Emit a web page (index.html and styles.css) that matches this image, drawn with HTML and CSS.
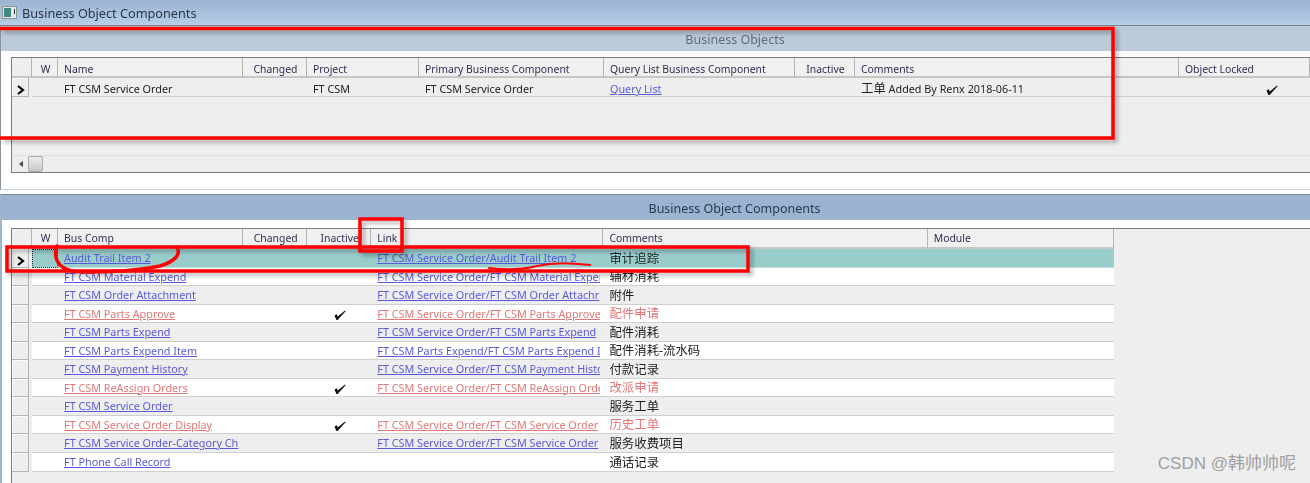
FILE: index.html
```html
<!DOCTYPE html>
<html lang="en">

<head>
    <meta charset="UTF-8">
    <meta name="viewport" content="width=device-width, initial-scale=1.0">
    <title>Business Object Components</title>
    <link rel="stylesheet" href="styles.css">
</head>

<body>
    <svg class="defs" width="0" height="0">
        <symbol id="check" viewBox="0 0 12 10">
            <path d="M0.5 5.5 L2.8 4.2 L3.8 6.4 L11 0.5 L11.6 1.2 L3.6 10 L2.4 10 Z" fill="#111" />
        </symbol>
        <symbol id="arrow" viewBox="0 0 8 10">
            <path d="M1 1 L6 5 L1 9" fill="none" stroke="#000" stroke-width="2.2" />
        </symbol>
    </svg>

    <header class="titlebar">
        <svg class="app-icon" width="15" height="13" viewBox="0 0 15 13">
            <rect x="0.5" y="0.5" width="14" height="12" fill="#e4e8ea" stroke="#8c9296" />
            <rect x="2" y="2" width="7" height="9" fill="#3f8a80" />
            <rect x="12" y="3" width="1" height="5" fill="#333" />
        </svg>
        <span>Business Object Components</span>
    </header>

    <section class="applet applet-top">
        <h2 class="applet-title">Business Objects</h2>
        <div class="grid">
            <table class="list">
                <colgroup>
                    <col class="c-mark">
                    <col class="c-w">
                    <col class="c-name">
                    <col class="c-changed">
                    <col class="c-project">
                    <col class="c-primary">
                    <col class="c-query">
                    <col class="c-inactive2">
                    <col class="c-comments">
                    <col>
                </colgroup>
                <thead>
                    <tr>
                        <th class="mark"></th>
                        <th class="mid">W</th>
                        <th>Name</th>
                        <th class="mid">Changed</th>
                        <th>Project</th>
                        <th>Primary Business Component</th>
                        <th>Query List Business Component</th>
                        <th class="mid">Inactive</th>
                        <th>Comments</th>
                        <th>Object Locked</th>
                    </tr>
                </thead>
                <tbody>
                    <tr class="tall plain">
                        <td class="mark"><svg width="8" height="10"><use href="#arrow" /></svg></td>
                        <td></td>
                        <td>FT CSM Service Order</td>
                        <td></td>
                        <td>FT CSM</td>
                        <td>FT CSM Service Order</td>
                        <td><a href="#">Query List</a></td>
                        <td></td>
                        <td><span class="cn">工单</span> Added By Renx 2018-06-11</td>
                        <td class="locked"><svg class="tick" width="12" height="10"><use href="#check" /></svg></td>
                    </tr>
                </tbody>
            </table>
            <div class="hscroll">
                <span class="scroll-left"></span>
                <span class="scroll-thumb"></span>
            </div>
        </div>
    </section>

    <section class="applet applet-bottom">
        <h2 class="applet-title">Business Object Components</h2>
        <div class="grid grid-fill">
            <table class="list list-short">
                <colgroup>
                    <col class="c-mark">
                    <col class="c-w">
                    <col class="c-name">
                    <col class="c-changed">
                    <col class="c-changed">
                    <col class="c-link">
                    <col class="c-comments">
                    <col class="c-module">
                </colgroup>
                <thead>
                    <tr>
                        <th class="mark"></th>
                        <th class="mid">W</th>
                        <th>Bus Comp</th>
                        <th class="mid">Changed</th>
                        <th class="mid">Inactive</th>
                        <th>Link</th>
                        <th>Comments</th>
                        <th>Module</th>
                    </tr>
                </thead>
                <tbody>
                    <tr class="tall current">
                        <td class="mark"><svg width="8" height="10"><use href="#arrow" /></svg></td>
                        <td class="focus"></td>
                        <td><a href="#">Audit Trail Item 2</a></td>
                        <td></td>
                        <td></td>
                        <td><a href="#">FT CSM Service Order/Audit Trail Item 2</a></td>
                        <td class="cn">审计追踪</td>
                        <td></td>
                    </tr>
                    <tr class="white">
                        <td class="mark"></td>
                        <td></td>
                        <td><a href="#">FT CSM Material Expend</a></td>
                        <td></td>
                        <td></td>
                        <td><a href="#">FT CSM Service Order/FT CSM Material Exper</a></td>
                        <td class="cn">辅材消耗</td>
                        <td></td>
                    </tr>
                    <tr class="tall">
                        <td class="mark"></td>
                        <td></td>
                        <td><a href="#">FT CSM Order Attachment</a></td>
                        <td></td>
                        <td></td>
                        <td><a href="#">FT CSM Service Order/FT CSM Order Attachr</a></td>
                        <td class="cn">附件</td>
                        <td></td>
                    </tr>
                    <tr class="white off">
                        <td class="mark"></td>
                        <td></td>
                        <td><a href="#">FT CSM Parts Approve</a></td>
                        <td></td>
                        <td class="mid"><svg class="tick" width="12" height="10"><use href="#check" /></svg></td>
                        <td><a href="#">FT CSM Service Order/FT CSM Parts Approve</a></td>
                        <td class="cn">配件申请</td>
                        <td></td>
                    </tr>
                    <tr class="tall">
                        <td class="mark"></td>
                        <td></td>
                        <td><a href="#">FT CSM Parts Expend</a></td>
                        <td></td>
                        <td></td>
                        <td><a href="#">FT CSM Service Order/FT CSM Parts Expend</a></td>
                        <td class="cn">配件消耗</td>
                        <td></td>
                    </tr>
                    <tr class="white">
                        <td class="mark"></td>
                        <td></td>
                        <td><a href="#">FT CSM Parts Expend Item</a></td>
                        <td></td>
                        <td></td>
                        <td><a href="#">FT CSM Parts Expend/FT CSM Parts Expend I</a></td>
                        <td class="cn">配件消耗-流水码</td>
                        <td></td>
                    </tr>
                    <tr class="tall">
                        <td class="mark"></td>
                        <td></td>
                        <td><a href="#">FT CSM Payment History</a></td>
                        <td></td>
                        <td></td>
                        <td><a href="#">FT CSM Service Order/FT CSM Payment Histo</a></td>
                        <td class="cn">付款记录</td>
                        <td></td>
                    </tr>
                    <tr class="white off">
                        <td class="mark"></td>
                        <td></td>
                        <td><a href="#">FT CSM ReAssign Orders</a></td>
                        <td></td>
                        <td class="mid"><svg class="tick" width="12" height="10"><use href="#check" /></svg></td>
                        <td><a href="#">FT CSM Service Order/FT CSM ReAssign Orde</a></td>
                        <td class="cn">改派申请</td>
                        <td></td>
                    </tr>
                    <tr class="tall">
                        <td class="mark"></td>
                        <td></td>
                        <td><a href="#">FT CSM Service Order</a></td>
                        <td></td>
                        <td></td>
                        <td></td>
                        <td class="cn">服务工单</td>
                        <td></td>
                    </tr>
                    <tr class="white off">
                        <td class="mark"></td>
                        <td></td>
                        <td><a href="#">FT CSM Service Order Display</a></td>
                        <td></td>
                        <td class="mid"><svg class="tick" width="12" height="10"><use href="#check" /></svg></td>
                        <td><a href="#">FT CSM Service Order/FT CSM Service Order</a></td>
                        <td class="cn">历史工单</td>
                        <td></td>
                    </tr>
                    <tr class="tall">
                        <td class="mark"></td>
                        <td></td>
                        <td><a href="#">FT CSM Service Order-Category Ch</a></td>
                        <td></td>
                        <td></td>
                        <td><a href="#">FT CSM Service Order/FT CSM Service Order</a></td>
                        <td class="cn">服务收费项目</td>
                        <td></td>
                    </tr>
                    <tr class="tall white">
                        <td class="mark"></td>
                        <td></td>
                        <td><a href="#">FT Phone Call Record</a></td>
                        <td></td>
                        <td></td>
                        <td></td>
                        <td class="cn">通话记录</td>
                        <td></td>
                    </tr>
                </tbody>
            </table>
        </div>
    </section>

    <div class="watermark">CSDN @韩帅帅呢</div>

    <!-- red marks drawn on top of the screenshot -->
    <svg class="marks" width="1310" height="483" viewBox="0 0 1310 483">
        <g class="marks-shadow" fill="none" stroke="#000" stroke-width="3.5">
            <path d="M0 28.5 H1113 V138 H0" />
            <path d="M360 219 H402 V251 H360 Z" />
            <path d="M7 247 H748 V271 H7 Z" />
        </g>
        <g fill="none" stroke="#f00" stroke-width="3.5">
            <path d="M0 28.5 H1113 V138 H0" />
            <path d="M360 219 H402 V251 H360 Z" />
            <path d="M7 247 H748 V271 H7 Z" />
            <path d="M177 247 C181 254 176 261 160 266 C130 272 90 273 72 271 C58 268 53 258 57 246" stroke-linecap="round" />
            <path d="M489 268 C505 270 520 270 537 266 C555 262 570 263 590 265" stroke-width="2" stroke-linecap="round" />
        </g>
    </svg>
</body>

</html>
```

FILE: styles.css
```css
html,
body {
    margin: 0;
    padding: 0;
}

body {
    width: 1310px;
    height: 483px;
    overflow: hidden;
    position: relative;
    display: flex;
    flex-direction: column;
    background-color: #fff;
    font-family: "Noto Sans", "Noto Sans CJK SC", sans-serif;
    font-size: 10.8px;
    color: #222;
}

.defs {
    position: absolute;
}

/* The source picture is a slightly soft upscale */
.titlebar,
.applet {
    filter: blur(0.35px);
}

/* Title bar */
.titlebar {
    height: 25px;
    flex: none;
    display: flex;
    align-items: center;
    gap: 5px;
    padding-left: 2px;
    background: linear-gradient(#9ab4d2, #b6cee7);
    border-bottom: 1px solid #7d8388;
    font-size: 12.7px;
    color: #2c3644;
}

/* Applets */
.applet {
    border-left: 1px solid #8d9499;
    display: flex;
    flex-direction: column;
}

.applet-title {
    margin: 0;
    height: 25px;
    font-size: 12.5px;
    font-weight: normal;
    text-align: center;
    line-height: 27px;
}

.applet-top {
    height: 163px;
    flex: none;
    border-bottom: 1px solid #c2d2e2;
}

.applet-top .applet-title {
    padding-left: 159px;
    background-color: #bccbda;
    color: #5f6b7a;
}

.applet-top .grid {
    margin: 6px 0 16px 10px;
    flex: 1;
    border-bottom: 1px solid #7c7c7c;
}

.applet-top th {
    padding-top: 3px;
}

.applet-top td {
    padding-top: 4px;
    line-height: 14px;
}

.applet-top td.mark {
    padding-top: 0;
}

.applet-top td .cn {
    font-size: 12.4px;
}

.applet-bottom {
    flex: 1;
    min-height: 0;
    margin-top: 4px;
    border-top: 1px solid #80868b;
    border-left: 2px solid #9fb5cd;
}

.applet-bottom .applet-title {
    padding-left: 157px;
    background-color: #9ab4d2;
    color: #2d3a4c;
}

.applet-bottom .grid {
    margin: 8px 0 0 9px;
    flex: 1;
}

.applet-bottom th {
    padding-bottom: 1px;
}

/* Grid */
.grid {
    display: flex;
    flex-direction: column;
    background-color: #eee;
    border-top: 1px solid #7c7c7c;
    border-left: 1px solid #7c7c7c;
}

.list {
    table-layout: fixed;
    border-collapse: separate;
    border-spacing: 0;
    width: 100%;
}

.list-short {
    width: 1102px;
}

.c-mark { width: 20px; }
.c-w { width: 26px; }
.c-name { width: 185px; }
.c-changed { width: 64px; }
.c-project { width: 112px; }
.c-primary { width: 185px; }
.c-query { width: 191px; }
.c-inactive2 { width: 60px; }
.c-comments { width: 324px; }
.c-link { width: 232px; }
.c-module { width: 186px; }

th,
td {
    padding: 0 0 0 6px;
    overflow: hidden;
    white-space: nowrap;
    text-align: left;
    font-weight: normal;
}

th {
    background-color: #f0f0f0;
    border-right: 1px solid #b4b4b4;
    border-bottom: 2px solid #c6c6c6;
    color: #2e2e52;
    box-sizing: border-box;
    height: 20px;
    font-size: 10.4px;
}

th.mid,
td.mid {
    padding-left: 2px;
    text-align: center;
}

tbody tr {
    height: 18px;
}

tbody tr.tall {
    height: 19px;
}

td {
    border-bottom: 1px solid #cfcfcf;
    box-sizing: border-box;
    line-height: 16px;
}

td.cn {
    font-size: 12.4px;
    padding-top: 1px;
}

.white td {
    background-color: #fff;
}

.plain td {
    background-color: #eee;
}

.current td {
    background-color: #99cdcc;
    border-bottom-color: #c4dcdc;
}

td.focus {
    outline: 1px dotted #333;
    outline-offset: -1px;
}

td.mark {
    padding: 0;
    text-align: center;
    background-color: #eee;
    border-right: 3px solid #eee;
    border-bottom: 0;
    box-shadow: inset -1px -1px 0 #b4b4b4, inset 1px 1px 0 #fafafa;
}

th.mark {
    padding: 0;
    background-color: #eee;
}

td.mark svg {
    display: block;
    margin: 4px 0 0 5px;
}

/* long links stop a little short of the next column */
a {
    display: block;
    overflow: hidden;
    margin-right: 3px;
    color: #5a5ad8;
}

.off a,
.off .cn {
    color: #e07878;
}

.tick {
    display: inline-block;
    vertical-align: middle;
}

.locked {
    text-align: right;
    padding-right: 32px;
}

/* Scrollbar */
.hscroll {
    margin-top: auto;
    height: 16px;
    display: flex;
    align-items: center;
    gap: 5px;
    padding-left: 7px;
    background-color: #ededed;
    border-top: 1px solid #e2e2e2;
}

.scroll-left {
    width: 0;
    height: 0;
    border: 3px solid transparent;
    border-left-width: 0;
    border-right: 4px solid #444;
}

.scroll-thumb {
    width: 13px;
    height: 14px;
    border: 1px solid #aaa;
    border-radius: 2px;
    background: linear-gradient(#ececec, #c8c8c8);
}

.watermark {
    position: absolute;
    right: 14px;
    bottom: 9px;
    font-size: 17px;
    font-family: "Liberation Sans", "Noto Sans CJK SC", sans-serif;
    color: #a0a0a0;
}

/* Annotations */
.marks {
    position: absolute;
    top: 0;
    left: 0;
}

.marks-shadow {
    opacity: 0.3;
    transform: translate(3px, 3px);
    filter: blur(2px);
}
```
